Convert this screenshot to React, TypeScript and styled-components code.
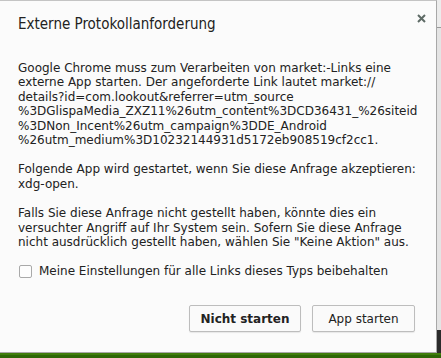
import React from 'react'
import styled, { createGlobalStyle } from 'styled-components'

const Global = createGlobalStyle`
  html, body {
    margin: 0;
    padding: 0;
    background: #e9e9e9;
  }
  body {
    font-family: "DejaVu Sans", sans-serif;
  }
`

const Screen = styled.div`
  display: grid;
  grid-template-columns: 437px 1fr;
  grid-template-rows: 353px 1fr;
  width: 441px;
  height: 358px;
  overflow: hidden;
`

const Dialog = styled.div`
  box-sizing: border-box;
  border: 1px solid #a8a8a8;
  border-left: none;
  border-top-color: #c4c4c4;
  background: #fbfbfb;
  padding: 13px 18px 0 18px;
  position: relative;
  color: #222;
`

const SideStrip = styled.div`
  background: linear-gradient(#ececec 0 27px, #9a9a9a 27px 28px, #e4e4e4 28px 330px, #2b2b2b 330px);
`

const BottomBar = styled.div`
  grid-column: 1 / span 2;
  background: linear-gradient(#3f7d0b 0 2px, #2e6606 2px);
`

const Title = styled.h1`
  margin: 0 0 27px 0;
  font-family: "DejaVu Sans Condensed", "DejaVu Sans", sans-serif;
  font-stretch: condensed;
  font-size: 15px;
  font-weight: normal;
  line-height: 20px;
  color: #222;
`

const Close = styled.button`
  position: absolute;
  top: 11px;
  right: 9px;
  width: 12px;
  height: 12px;
  border: none;
  padding: 0;
  background: transparent;
  display: flex;
  align-items: center;
  justify-content: center;
`

const Text = styled.p`
  margin: 0 0 15px 0;
  font-size: 12px;
  line-height: 14.4px;
  color: #222;
  word-break: break-word;
`

const CheckRow = styled.label`
  display: flex;
  align-items: center;
  gap: 7px;
  margin-top: 4px;
  font-size: 12px;
  color: #222;
`

const Box = styled.span`
  width: 13px;
  height: 13px;
  box-sizing: border-box;
  border: 1px solid #a9a9a9;
  border-radius: 2px;
  background: #fdfdfd;
  margin-left: 1px;
`

const Actions = styled.div`
  display: flex;
  justify-content: flex-end;
  gap: 11px;
  margin-top: 27px;
  padding-right: 3px;
`

const Button = styled.button<{ $primary?: boolean }>`
  height: 27px;
  padding: 0 ${p => (p.$primary ? '10px' : '15px')};
  min-width: ${p => (p.$primary ? '112px' : '103px')};
  border: 1px solid #bdbdbd;
  border-radius: 2px;
  background: #fafafa;
  box-shadow: 0 1px 1px rgba(0, 0, 0, 0.08);
  font-family: "DejaVu Sans", sans-serif;
  font-size: 12px;
  font-weight: ${p => (p.$primary ? 'bold' : 'normal')};
  color: #222;
`

export default function App() {
  return (
    <>
      <Global />
      <Screen>
        <Dialog>
          <Title>Externe Protokollanforderung</Title>
          <Close aria-label="Schließen">
            <svg width="9" height="9" viewBox="0 0 9 9">
              <path d="M1 1 L8 8 M8 1 L1 8" stroke="#5e6b66" strokeWidth="2" />
            </svg>
          </Close>
          <Text>
            Google Chrome muss zum Verarbeiten von market:-Links eine externe App starten. Der angeforderte Link lautet market://
            details?id=com.lookout&amp;referrer=utm_source
            %3DGlispaMedia_ZXZ11%26utm_content%3DCD36431_%26siteid
            %3DNon_Incent%26utm_campaign%3DDE_Android
            %26utm_medium%3D10232144931d5172eb908519cf2cc1.
          </Text>
          <Text>Folgende App wird gestartet, wenn Sie diese Anfrage akzeptieren: xdg-open.</Text>
          <Text>
            Falls Sie diese Anfrage nicht gestellt haben, könnte dies ein versuchter Angriff auf Ihr System sein. Sofern Sie diese Anfrage nicht ausdrücklich gestellt haben, wählen Sie "Keine Aktion" aus.
          </Text>
          <CheckRow>
            <Box />
            Meine Einstellungen für alle Links dieses Typs beibehalten
          </CheckRow>
          <Actions>
            <Button $primary>Nicht starten</Button>
            <Button>App starten</Button>
          </Actions>
        </Dialog>
        <SideStrip />
        <BottomBar />
      </Screen>
    </>
  )
}
